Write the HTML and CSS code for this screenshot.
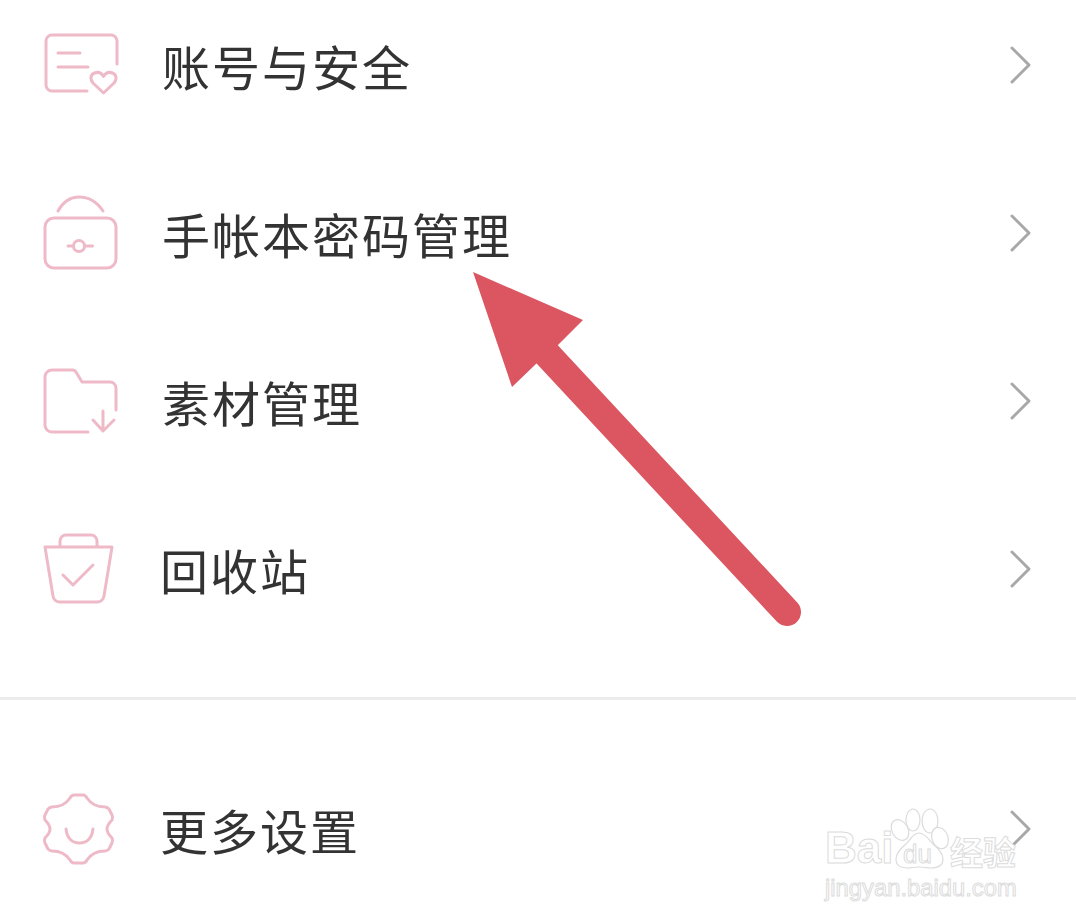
FILE: index.html
```html
<!DOCTYPE html>
<html lang="zh-CN">
<head>
<meta charset="utf-8">
<title>设置</title>
<link rel="stylesheet" href="styles.css">
</head>
<body>
<main class="page">
  <ul class="menu">
    <li class="row">
      <svg class="icon" viewBox="0 0 80 80"><path d="M46 63H11a6 6 0 0 1-6-6V13a6 6 0 0 1 6-6h59a6 6 0 0 1 6 6v23"/><path d="M17 25h22M17 39h30"/><path d="M62.500 65l-10-9.500c-4-4-3-9 1-10.500 4-1.500 7 0 9 3.500 2-3.500 5-5 9-3.500 4 1.500 5 6.500 1 10.500z"/></svg>
      <span class="label">账号与安全</span>
      <svg class="chevron" viewBox="0 0 24 40"><path d="M3 3l17 17-17 17"/></svg>
    </li>
    <li class="row">
      <svg class="icon" viewBox="0 0 80 80"><path d="M17 15c5-9 12-14 21-14s18 5 24 14"/><rect x="4" y="22" width="71" height="50" rx="9"/><circle cx="38" cy="50" r="5.500"/><path d="M27 50h5.500M43.500 50h8"/></svg>
      <span class="label">手帐本密码管理</span>
      <svg class="chevron" viewBox="0 0 24 40"><path d="M3 3l17 17-17 17"/></svg>
    </li>
    <li class="row">
      <svg class="icon" viewBox="0 0 80 80"><path d="M47 68H11a7 7 0 0 1-7-7V13a7 7 0 0 1 7-7h21a4 4 0 0 1 3 2l6 10h28a6 6 0 0 1 6 6v22"/><path d="M62 47v20M52 56l10 11 11-11"/></svg>
      <span class="label">素材管理</span>
      <svg class="chevron" viewBox="0 0 24 40"><path d="M3 3l17 17-17 17"/></svg>
    </li>
    <li class="row row-tight">
      <svg class="icon" viewBox="0 0 80 80"><path d="M4 15h67l-8 49a7 7 0 0 1-7 6H19a7 7 0 0 1-7-6z"/><path d="M19 14V9a6 6 0 0 1 6-6h25a6 6 0 0 1 6 6v5"/><path d="M22 43l10 10 20-20"/></svg>
      <span class="label">回收站</span>
      <svg class="chevron" viewBox="0 0 24 40"><path d="M3 3l17 17-17 17"/></svg>
    </li>
  </ul>
  <hr class="divider">
  <ul class="menu">
    <li class="row row-tight">
      <svg class="icon" viewBox="0 0 80 80"><path d="M33 3h9c2 0 3 1 4 3 4 6 10 9 18 9 2 0 3 1 4 2l3 6c1 2 1 3 0 5-3 3-5 6-5 9s2 6 5 9c1 2 1 3 0 5l-3 6c-1 1-2 2-4 2-8 0-14 3-18 9-1 2-2 3-4 3h-9c-2 0-3-1-4-3-4-6-10-9-18-9-2 0-3-1-4-2l-3-6c-1-2-1-3 0-5 3-3 5-6 5-9s-2-6-5-9c-1-2-1-3 0-5l3-6c1-1 2-2 4-2 8 0 14-3 18-9 1-2 2-3 4-3z"/><path d="M25 37c1 9 6 14 13.500 14S51 46 52 37"/></svg>
      <span class="label">更多设置</span>
      <svg class="chevron" viewBox="0 0 24 40"><path d="M3 3l17 17-17 17"/></svg>
    </li>
  </ul>
</main>

<svg class="arrow" viewBox="0 0 1076 924" aria-hidden="true">
  <path class="arrow-shaft" d="M545 352L787 612"/>
  <path class="arrow-head" d="M473 272L583 320L558 345L537 363L512 387Z"/>
</svg>

<div class="watermark">
  <div class="wm-top">
    <span class="wm-bai">Bai</span>
    <span class="wm-paw">
      <svg viewBox="0 0 56 62"><ellipse cx="8" cy="22" rx="8" ry="11" transform="rotate(-30 8 22)"/><ellipse cx="21" cy="12" rx="7" ry="11"/><ellipse cx="38" cy="13" rx="8" ry="12"/><ellipse cx="48" cy="30" rx="8" ry="11" transform="rotate(-20 48 30)"/><path d="M27 25c6 0 10 7 14 11 6 5 10 10 10 15 0 7-6 9-12 9-4 0-8-1-12-1s-8 1-12 1c-6 0-11-2-11-9 0-5 4-10 10-15 4-4 7-11 13-11z"/></svg>
      <span class="wm-du">du</span>
    </span>
    <span class="wm-cn">经验</span>
  </div>
  <div class="wm-url">jingyan.baidu.com</div>
</div>
</body>
</html>
```
FILE: styles.css
```css
* { box-sizing: border-box; }

html, body {
  margin: 0;
  padding: 0;
  height: 100%;
  background: #fff;
  overflow: hidden;
}

body {
  font-family: "Noto Sans CJK SC", "Noto Sans", sans-serif;
  color: #333;
  position: relative;
}

.page {
  display: flex;
  flex-direction: column;
  margin-top: -16px;
}

.menu {
  list-style: none;
  margin: 0;
  padding: 0;
}

.row {
  display: flex;
  align-items: center;
  height: 168px;
  padding-left: 41px;
  padding-right: 43px;
}

.icon {
  width: 80px;
  height: 80px;
  flex: none;
  margin-right: 41px;
  fill: none;
  stroke: #efbac8;
  stroke-width: 3;
  stroke-linecap: round;
  stroke-linejoin: round;
  overflow: visible;
  filter: blur(0.5px);
}

.row-tight .icon { margin-right: 39px; }

.label {
  font-size: 48px;
  letter-spacing: 2px;
  line-height: 1;
  font-weight: 400;
  color: #333;
  margin-top: -7px;
  filter: blur(0.3px);
}

.chevron {
  width: 24px;
  height: 40px;
  flex: none;
  margin-left: auto;
  margin-top: -7px;
  fill: none;
  stroke: #a8a8a8;
  stroke-width: 3;
  stroke-linecap: round;
  stroke-linejoin: round;
}

.divider {
  border: 0;
  height: 3px;
  background: #ececec;
  margin: 41px 0 48px;
}

.arrow {
  position: absolute;
  left: 0;
  top: 0;
  width: 1076px;
  height: 924px;
  pointer-events: none;
}

.arrow-shaft {
  fill: none;
  stroke: #db5660;
  stroke-width: 28;
  stroke-linecap: round;
}

.arrow-head { fill: #db5660; }

.watermark {
  position: absolute;
  left: 825px;
  top: 808px;
  width: 210px;
  color: #fff;
  -webkit-text-stroke: 1px #dcdcdc;
  font-family: "Liberation Sans", "Noto Sans CJK SC", sans-serif;
}

.wm-top {
  display: flex;
  align-items: flex-end;
  height: 62px;
  white-space: nowrap;
}

.wm-bai {
  flex: none;
  width: 67px;
  font-size: 44px;
  line-height: 44px;
  font-weight: 700;
}

.wm-paw {
  position: relative;
  width: 56px;
  height: 62px;
  flex: none;
}

.wm-paw svg {
  display: block;
  width: 56px;
  height: 62px;
  fill: #fff;
  stroke: #dcdcdc;
  stroke-width: 1.2;
  overflow: visible;
}

.wm-du {
  position: absolute;
  left: 11px;
  bottom: 2px;
  font-size: 26px;
  line-height: 28px;
}

.wm-cn {
  flex: none;
  font-family: "Noto Sans CJK SC", sans-serif;
  font-size: 33px;
  line-height: 38px;
  font-weight: 700;
  margin-left: 2px;
}

.wm-url {
  font-size: 23.800px;
  line-height: 28px;
  margin-top: 4px;
  white-space: nowrap;
}
```
